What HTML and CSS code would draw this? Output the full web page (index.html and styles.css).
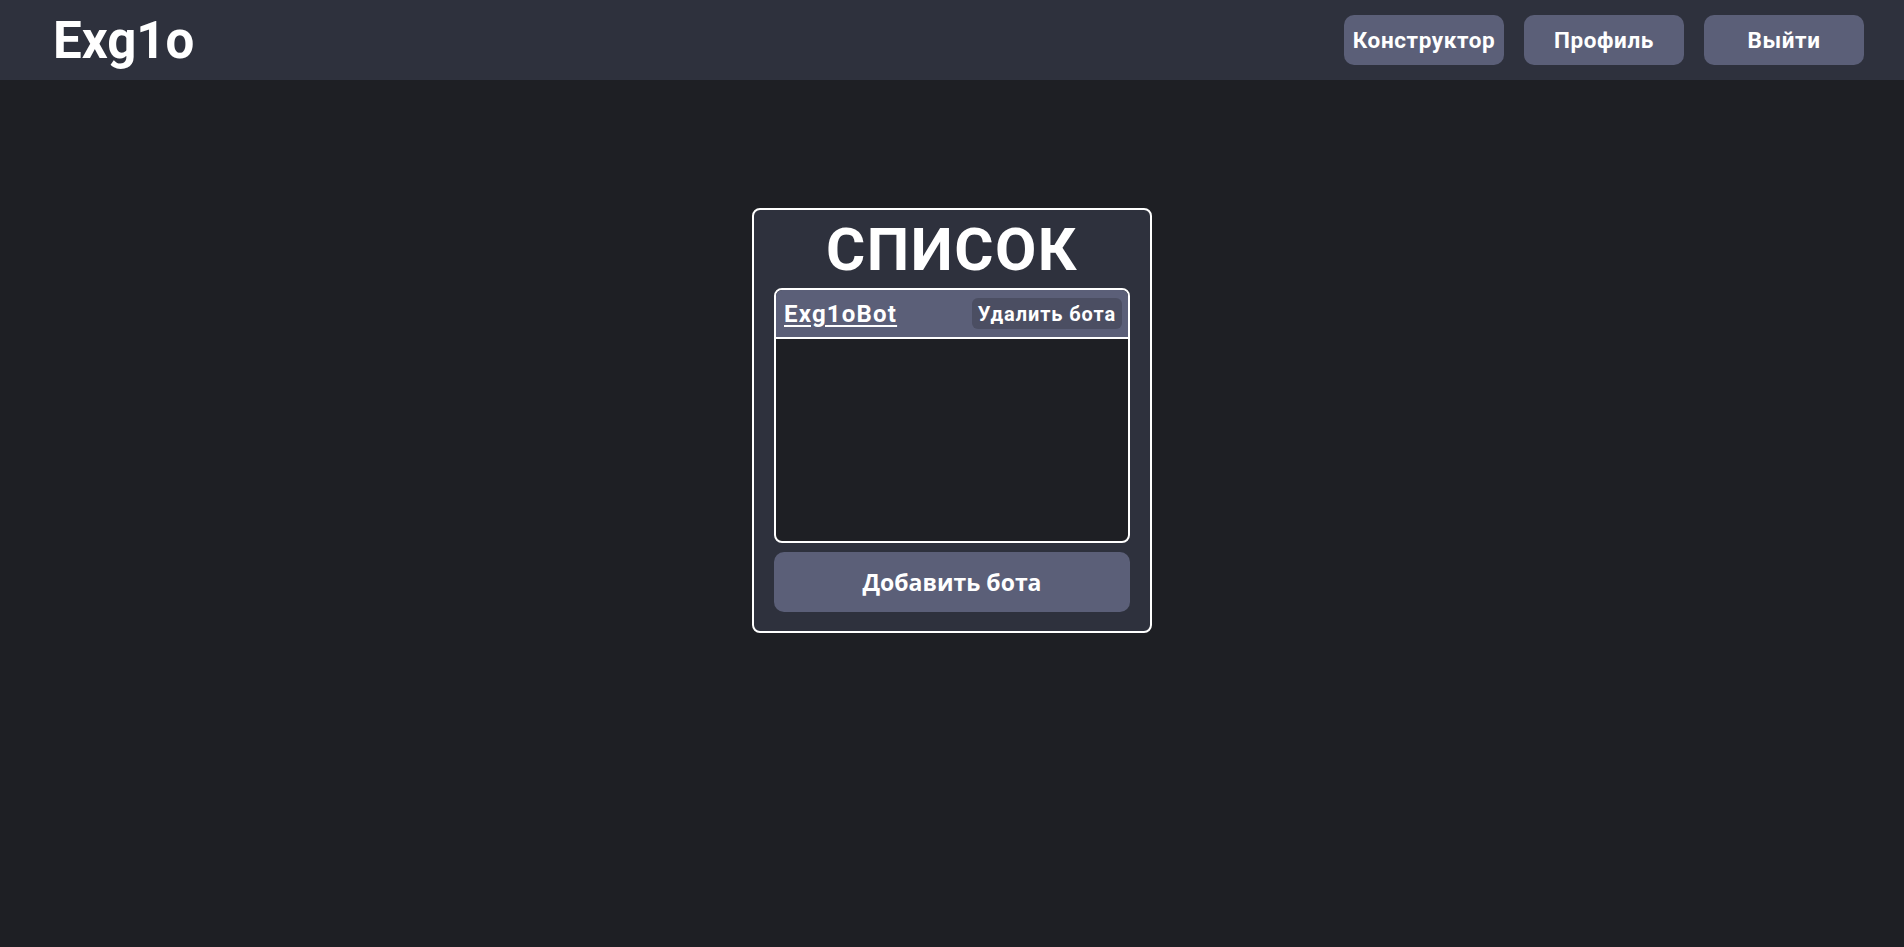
FILE: index.html
```html
<!DOCTYPE html>
<html lang="ru">
<head>
<meta charset="utf-8">
<title>Exg1o</title>
<link rel="stylesheet" href="styles.css">
</head>
<body>
<header class="topbar">
  <div class="logo">Exg1o</div>
  <nav class="nav">
    <button class="nav-btn">Конструктор</button>
    <button class="nav-btn">Профиль</button>
    <button class="nav-btn">Выйти</button>
  </nav>
</header>
<main class="main">
  <section class="card">
    <h1 class="card-title">СПИСОК</h1>
    <div class="list">
      <div class="list-item">
        <a class="bot-link" href="#">Exg1oBot</a>
        <button class="del-btn">Удалить бота</button>
      </div>
      <div class="list-body"></div>
    </div>
    <button class="add-btn">Добавить бота</button>
  </section>
</main>
</body>
</html>
```
FILE: styles.css
```css
* { box-sizing: border-box; }
html, body {
  margin: 0;
  padding: 0;
  background: #1e1f24;
  color: #fff;
  font-family: Roboto, "Liberation Sans", sans-serif;
  height: 100%;
}
.topbar {
  height: 80px;
  background: #2e313d;
  display: flex;
  align-items: center;
  justify-content: space-between;
  padding: 0 40px 0 53px;
}
.logo {
  font-size: 51px;
  font-weight: 700;
  line-height: 1;
}
.nav {
  display: flex;
  gap: 20px;
}
.nav-btn {
  width: 160px;
  height: 50px;
  border: none;
  border-radius: 10px;
  background: #5b5f78;
  color: #fff;
  font-family: Roboto, "Liberation Sans", sans-serif;
  font-weight: 700;
  font-size: 22.5px;
  letter-spacing: 0.6px;
  padding: 0;
  cursor: pointer;
}
.main {
  display: flex;
  justify-content: center;
  padding-top: 128px;
}
.card {
  width: 400px;
  background: #2e313d;
  border: 2px solid #fff;
  border-radius: 8px;
  padding: 6px 20px 19px;
  display: flex;
  flex-direction: column;
}
.card-title {
  margin: 0 0 4px;
  text-align: center;
  font-size: 60px;
  line-height: 68px;
  font-weight: 700;
  letter-spacing: 1.5px;
}
.list {
  border: 2px solid #fff;
  border-radius: 8px;
  overflow: hidden;
  background: #1e1f24;
}
.list-item {
  height: 49px;
  background: #5b5f78;
  border-bottom: 2px solid #fff;
  display: flex;
  align-items: center;
  justify-content: space-between;
  padding: 0 6px 0 8px;
}
.bot-link {
  color: #fff;
  font-weight: 700;
  font-size: 24px;
  letter-spacing: 1.2px;
  text-decoration: underline;
  text-underline-offset: 3px;
  text-decoration-thickness: 2px;
}
.del-btn {
  height: 31px;
  border: none;
  border-radius: 6px;
  background: #4b4e62;
  color: #fff;
  font-family: Roboto, "Liberation Sans", sans-serif;
  font-weight: 700;
  font-size: 20px;
  letter-spacing: 0.9px;
  padding: 0 6px;
}
.list-body {
  height: 202px;
}
.add-btn {
  margin-top: 9px;
  height: 60px;
  border: none;
  border-radius: 10px;
  background: #5b5f78;
  color: #fff;
  font-family: "Open Sans", "Noto Sans", sans-serif;
  font-weight: 700;
  font-size: 23px;
  padding: 0;
}
```
